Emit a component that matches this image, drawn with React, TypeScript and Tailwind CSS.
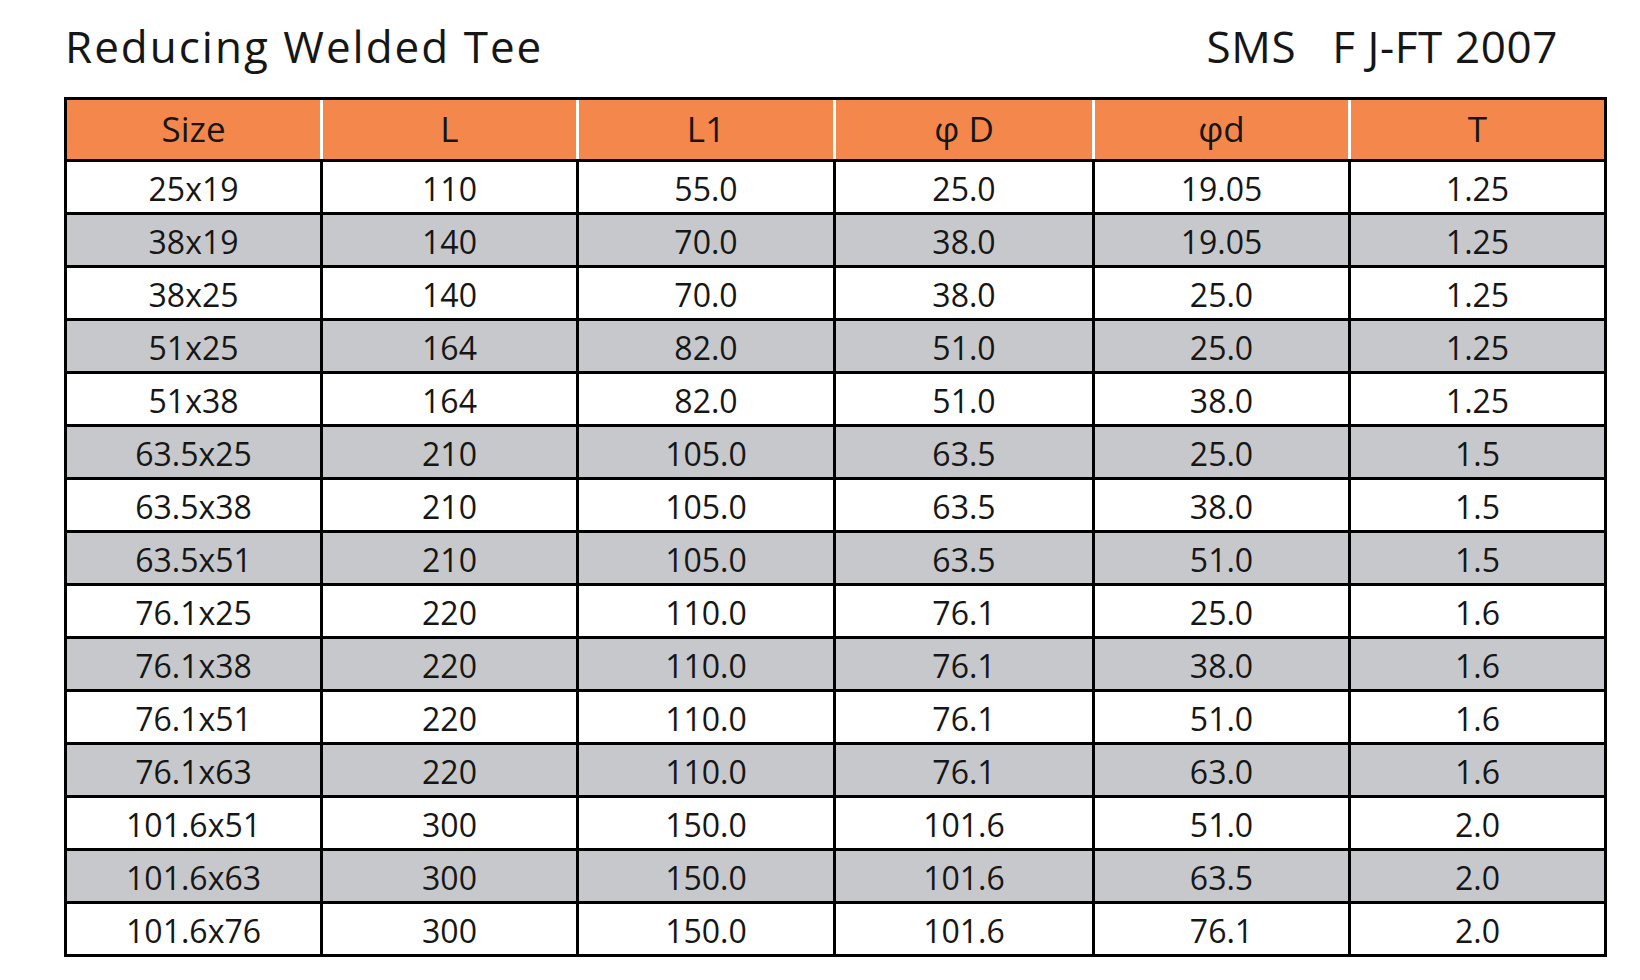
import React from 'react';

const headers = ['Size', 'L', 'L1', 'φ D', 'φd', 'T'];

const rows: string[][] = [
  ['25x19', '110', '55.0', '25.0', '19.05', '1.25'],
  ['38x19', '140', '70.0', '38.0', '19.05', '1.25'],
  ['38x25', '140', '70.0', '38.0', '25.0', '1.25'],
  ['51x25', '164', '82.0', '51.0', '25.0', '1.25'],
  ['51x38', '164', '82.0', '51.0', '38.0', '1.25'],
  ['63.5x25', '210', '105.0', '63.5', '25.0', '1.5'],
  ['63.5x38', '210', '105.0', '63.5', '38.0', '1.5'],
  ['63.5x51', '210', '105.0', '63.5', '51.0', '1.5'],
  ['76.1x25', '220', '110.0', '76.1', '25.0', '1.6'],
  ['76.1x38', '220', '110.0', '76.1', '38.0', '1.6'],
  ['76.1x51', '220', '110.0', '76.1', '51.0', '1.6'],
  ['76.1x63', '220', '110.0', '76.1', '63.0', '1.6'],
  ['101.6x51', '300', '150.0', '101.6', '51.0', '2.0'],
  ['101.6x63', '300', '150.0', '101.6', '63.5', '2.0'],
  ['101.6x76', '300', '150.0', '101.6', '76.1', '2.0'],
];

const cols = 'grid grid-cols-[253px_256px_257px_259px_256px_256px]';

export default function App() {
  return (
    <div className="w-[1640px] h-[980px] bg-white text-[#161616] font-['Open_Sans',sans-serif] overflow-hidden">
      {/* title line */}
      <div className="flex items-end justify-between pl-[65px] pr-[82px] h-[78px]">
        <h1 className="text-[44px] leading-none tracking-[2px] pb-[10px]">Reducing Welded Tee</h1>
        <div className="text-[44px] leading-none tracking-[0.6px] pb-[10px] whitespace-pre">SMS   F J-FT 2007</div>
      </div>

      {/* table */}
      <div className="ml-[64px] mt-[19px] w-[1543px] border-[3px] border-black">
        <div className={`${cols} h-[59px] bg-[#f4874b]`}>
          {headers.map((h, i) => (
            <div
              key={h}
              className={`flex items-center justify-center text-[35px] ${i > 0 ? 'border-l-[3px] border-white' : ''}`}
            >
              {h}
            </div>
          ))}
        </div>
        {rows.map((r, ri) => (
          <div
            key={r[0]}
            className={`${cols} h-[53px] border-t-[3px] border-black ${ri % 2 === 1 ? 'bg-[#c6c8cc]' : 'bg-white'}`}
          >
            {r.map((c, ci) => (
              <div
                key={ci}
                className={`flex items-center justify-center pt-[3px] text-[32px] ${ci > 0 ? 'border-l-[3px] border-black' : ''}`}
              >
                {c}
              </div>
            ))}
          </div>
        ))}
      </div>
    </div>
  );
}
